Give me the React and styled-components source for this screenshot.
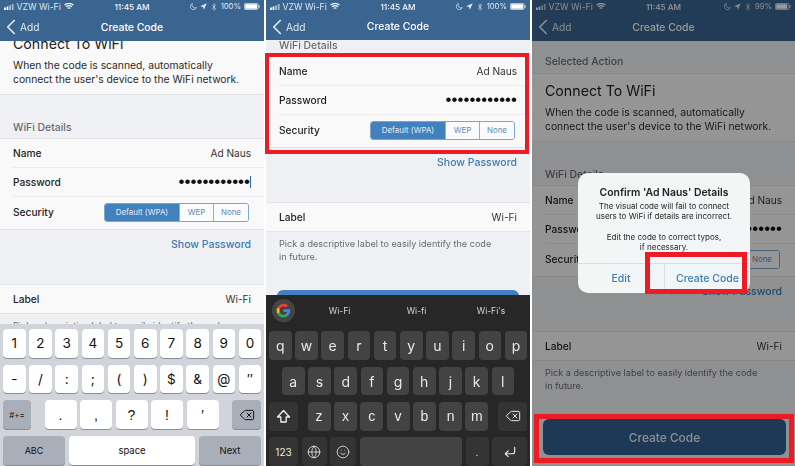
import React from 'react';
import styled, { createGlobalStyle } from 'styled-components';
import { ChevronLeft, Delete, Globe, Smile, CornerDownLeft, Bluetooth } from 'lucide-react';

const Global = createGlobalStyle`
  html, body { margin: 0; padding: 0; background: #fff; }
  body { font-family: Inter, "Liberation Sans", sans-serif; width: 795px; height: 466px; overflow: hidden; }
`;

const Page = styled.div`
  display: flex;
  width: 795px;
  height: 466px;
  filter: blur(0.3px);
`;
const Phone = styled.div`
  position: relative;
  display: flex;
  flex-direction: column;
  width: ${p => p.$w}px;
  margin-left: ${p => p.$ml || 0}px;
  height: 466px;
  flex: none;
  background: #eff0f3;
`;
const Top = styled.div`
  flex: none;
  height: ${p => p.$h}px;
  background: #3a6591;
  color: #fff;
  display: flex;
  flex-direction: column;
`;
const Status = styled.div`
  height: 13px;
  padding: 0 4px 0 4px;
  display: grid;
  grid-template-columns: 1fr auto 1fr;
  align-items: center;
  font-size: 7.7px;
  color: #dfe7ef;
`;
const StatusSide = styled.div`
  display: flex;
  align-items: center;
  gap: ${p => (p.$end ? 3 : 1.5)}px;
  justify-content: ${p => (p.$end ? 'flex-end' : 'flex-start')};
`;
const Carrier = styled.span`
  font-size: 8.7px;
  margin-right: 2px;
`;
const Time = styled.span`
  font-weight: 500;
  font-size: 8.2px;
  color: #f4f6f8;
`;
const Nav = styled.div`
  flex: 1;
  position: relative;
  display: flex;
  align-items: center;
  justify-content: center;
  font-size: 10.4px;
  font-weight: 500;
`;
const Back = styled.div`
  position: absolute;
  left: -2px;
  top: 50%;
  transform: translateY(-50%);
  display: flex;
  align-items: center;
  font-weight: 400;
  font-size: 10.2px;
  opacity: 0.85;
`;
const BackText = styled.span`
  margin-left: -4px;
`;
const Viewport = styled.div`
  flex: 1;
  min-height: 0;
  overflow: hidden;
`;
const Form = styled.div`
  margin-top: ${p => -p.$offset}px;
  display: flex;
  flex-direction: column;
`;
const SectionHead = styled.div`
  height: ${p => p.$h}px;
  padding: 0 13px ${p => p.$pb}px;
  box-sizing: border-box;
  display: flex;
  align-items: flex-end;
  font-size: 10.4px;
  font-weight: 500;
  color: #6c6c70;
`;
const Section = styled.div`
  background: #f9f9f9;
  border-top: 1px solid #e3e4e6;
  border-bottom: 1px solid #e3e4e6;
  box-sizing: border-box;
  padding: ${p => p.$pad || '0'};
`;
const ActionTitle = styled.div`
  font-size: 14.2px;
  line-height: 20px;
  color: #222;
  margin-bottom: 4px;
`;
const ActionText = styled.div`
  font-size: 10.3px;
  line-height: 14px;
  color: #2b2b2b;
`;
const Rows = styled.div`
  padding-left: 13px;
`;
const Row = styled.div`
  height: ${p => p.$h}px;
  box-sizing: border-box;
  padding: 0 13px ${p => p.$pb || 0}px 0;
  display: flex;
  justify-content: space-between;
  align-items: center;
  border-bottom: ${p => (p.$last ? 'none' : '1px solid #ececee')};
`;
const RowLabel = styled.span`
  font-size: 10.2px;
  font-weight: 500;
  color: #1e1e1e;
`;
const RowValue = styled.span`
  font-size: 10.1px;
  color: #333;
`;
const Dots = styled.span`
  font-family: "Liberation Sans", sans-serif;
  font-size: 17px;
  line-height: 14px;
  color: #111;
  display: flex;
  align-items: center;
`;
const Caret = styled.i`
  display: inline-block;
  width: 1px;
  height: 12px;
  background: #2f6ea8;
`;
const Segments = styled.div`
  display: flex;
  height: 19px;
  margin-right: 2px;
  border: 1px solid #7ea4c6;
  border-radius: 3px;
  box-sizing: border-box;
  overflow: hidden;
`;
const Segment = styled.div`
  width: ${p => p.$w}px;
  display: flex;
  align-items: center;
  justify-content: center;
  font-size: 7.9px;
  background: ${p => (p.$on ? '#4281bd' : '#fafbfc')};
  color: ${p => (p.$on ? '#e4edf5' : '#5f8cb3')};
  border-left: ${p => (p.$first ? 'none' : '1px solid #8fb0cc')};
`;
const LinkRow = styled.div`
  height: 54px;
  box-sizing: border-box;
  padding: 8px 13px 0;
  text-align: right;
  font-size: 10.5px;
  font-weight: 500;
  color: #3f7cae;
`;
const Help = styled.div`
  padding: 5px 32px 0 13px;
  font-size: 9.1px;
  line-height: 13px;
  color: #6b6b6f;
`;
const SubmitButton = styled.div`
  margin: 27px ${p => p.$mr}px 0 11px;
  height: 36px;
  border-radius: 6px;
  background: ${p => p.$bg};
  color: #e6edf3;
  font-size: 11.9px;
  font-weight: 500;
  display: flex;
  align-items: center;
  justify-content: center;
`;
const Dim = styled.div`
  position: absolute;
  inset: 0;
  background: rgba(0, 0, 0, 0.4);
`;
const RedBox = styled.div`
  position: absolute;
  left: ${p => p.$l}px;
  top: ${p => p.$t}px;
  width: ${p => p.$w}px;
  height: ${p => p.$h}px;
  box-sizing: border-box;
  border: ${p => p.$b}px solid #ed1c24;
`;
const Alert = styled.div`
  position: absolute;
  left: 46px;
  top: 173px;
  width: 172px;
  height: 120px;
  border-radius: 10px;
  background: radial-gradient(circle at 65% 75%, #f0f6fa 0, #f4f5f5 60%);
  display: flex;
  flex-direction: column;
`;
const AlertBody = styled.div`
  flex: 1;
  padding-top: 12px;
  text-align: center;
  color: #222;
`;
const AlertTitle = styled.div`
  font-size: 10.4px;
  font-weight: 600;
  line-height: 16px;
`;
const AlertText = styled.div`
  font-size: 8px;
  line-height: 10.3px;
  margin-top: ${p => p.$mt || 0}px;
`;
const AlertButtons = styled.div`
  display: grid;
  grid-template-columns: 86px 86px;
  height: 29px;
  border-top: 1px solid #dcdfe2;
`;
const AlertButton = styled.div`
  display: flex;
  align-items: center;
  justify-content: center;
  font-size: 10.5px;
  font-weight: 500;
  color: #3f7cae;
  border-left: ${p => (p.$div ? '1px solid #dcdfe2' : 'none')};
`;
const LightKb = styled.div`
  flex: none;
  height: 142px;
  box-sizing: border-box;
  background: #d1d5db;
  padding: 5px 3px 0;
  display: flex;
  flex-direction: column;
  gap: 7.2px;
`;
const DarkKb = styled.div`
  flex: none;
  height: 171px;
  box-sizing: border-box;
  background: #272727;
  padding: 0 3px;
  display: flex;
  flex-direction: column;
  gap: 6.7px;
`;
const KeyRow = styled.div`
  display: flex;
  height: ${p => (p.$dark ? 29 : 28.5)}px;
  gap: ${p => p.$gap ?? 3.6}px;
  justify-content: ${p => p.$justify || 'flex-start'};
  padding-left: ${p => p.$pl || 0}px;
`;
const KeyGroup = styled.div`
  display: flex;
  gap: ${p => p.$gap}px;
  font-family: "Liberation Sans", sans-serif;
`;
const Key = styled.div`
  flex: ${p => (p.$grow ? '1' : 'none')};
  width: ${p => p.$w}px;
  border-radius: 4px;
  display: flex;
  align-items: center;
  justify-content: center;
  font-size: ${p => p.$fs || 15}px;
  background: ${p => p.$bg || '#fff'};
  color: ${p => p.$fg || '#111'};
  box-shadow: ${p => (p.$dark ? 'none' : '0 1px 0 #8a8e94')};
`;
const Suggestions = styled.div`
  height: 26px;
  padding-top: 3px;
  display: grid;
  grid-template-columns: 32px 77px 77px 1fr;
  align-items: center;
  font-size: 8.5px;
  color: #d6d6d6;
  margin-bottom: 1px;
`;
const GoogleButton = styled.div`
  width: 23px;
  height: 23px;
  margin-left: 3px;
  border-radius: 50%;
  background: #444;
  display: flex;
  align-items: center;
  justify-content: center;
`;
const Word = styled.div`
  text-align: center;
`;

const Signal = () => (
  <svg width="11" height="6" viewBox="0 0 11 6">
    <rect x="0" y="3.5" width="1.8" height="2.5" fill="#fff" />
    <rect x="2.6" y="2.5" width="1.8" height="3.5" fill="#fff" />
    <rect x="5.2" y="1.2" width="1.8" height="4.8" fill="#fff" opacity=".55" />
    <rect x="7.8" y="0" width="1.8" height="6" fill="#fff" opacity=".55" />
  </svg>
);
const WifiIcon = () => (
  <svg width="10" height="7" viewBox="0 0 10 7" fill="none" stroke="#fff" strokeWidth="1.1">
    <path d="M.5 2.2C3 -.1 7 -.1 9.5 2.2M2 3.9c1.7-1.5 4.3-1.5 6 0M3.6 5.4c.8-.6 2-.6 2.8 0" />
  </svg>
);
const MoonIcon = () => (
  <svg width="7" height="7" viewBox="0 0 7 7">
    <path d="M2.3.6a3.1 3.1 0 1 0 4 4A3 3 0 0 1 2.3.6z" fill="none" stroke="#fff" strokeWidth=".8" opacity=".75" />
  </svg>
);
const LocationIcon = () => (
  <svg width="7" height="7" viewBox="0 0 7 7">
    <path d="M6.8.2 3.8 6.8 3.1 3.9.2 3.2z" fill="#fff" opacity=".85" />
  </svg>
);
const BatteryIcon = ({ level }) => (
  <svg width="16" height="7" viewBox="0 0 16 7">
    <rect x=".4" y=".4" width="13.6" height="6.2" rx="1.3" fill="none" stroke="#fff" strokeWidth=".7" />
    <rect x="1.2" y="1.2" width={level} height="4.6" fill="#fff" />
    <rect x="14.5" y="2.3" width="1" height="2.4" fill="#fff" />
  </svg>
);
const GoogleLogo = () => (
  <svg width="15" height="15" viewBox="0 0 24 24">
    <path d="M22.5 12.3c0-.8-.1-1.5-.2-2.3H12v4.4h5.9a5 5 0 0 1-2.2 3.3v2.7h3.5c2.1-1.9 3.3-4.8 3.3-8.1z" fill="#4285f4" />
    <path d="M12 23c3 0 5.4-1 7.2-2.6l-3.5-2.7c-1 .7-2.2 1-3.7 1-2.8 0-5.2-1.9-6.1-4.5H2.3v2.8A11 11 0 0 0 12 23z" fill="#34a853" />
    <path d="M5.9 14.2a6.6 6.6 0 0 1 0-4.4V7H2.3a11 11 0 0 0 0 10z" fill="#fbbc05" />
    <path d="M12 5.4c1.6 0 3 .5 4.1 1.6l3.1-3.1A11 11 0 0 0 2.3 7l3.6 2.8C6.8 7.3 9.2 5.4 12 5.4z" fill="#ea4335" />
  </svg>
);
const ShiftIcon = () => (
  <svg width="15" height="15" viewBox="0 0 15 15" fill="none" stroke="#f0f0f0" strokeWidth="1.3" strokeLinejoin="round">
    <path d="M7.5 1.5 1.5 8h3.3v5h5.4V8h3.3z" />
  </svg>
);

const Header = ({ h, pct = '100%', level = 11.8 }) => (
  <Top $h={h}>
    <Status>
      <StatusSide><Signal /><Carrier>VZW Wi-Fi</Carrier><WifiIcon /></StatusSide>
      <Time>11:45 AM</Time>
      <StatusSide $end>
        <MoonIcon /><LocationIcon /><Bluetooth size={8} strokeWidth={1.8} />
        <span>{pct}</span><BatteryIcon level={level} />
      </StatusSide>
    </Status>
    <Nav>
      <Back><ChevronLeft size={26} strokeWidth={1.6} /><BackText>Add</BackText></Back>
      Create Code
    </Nav>
  </Top>
);

const FormBody = ({ offset, caret, buttonBg, buttonMr }) => (
  <Form $offset={offset}>
    <SectionHead $h={32} $pb={5}>Selected Action</SectionHead>
    <Section $pad="7px 13px 8px">
      <ActionTitle>Connect To WiFi</ActionTitle>
      <ActionText>When the code is scanned, automatically<br />connect the user's device to the WiFi network.</ActionText>
    </Section>
    <SectionHead $h={43} $pb={4}>WiFi Details</SectionHead>
    <Section>
      <Rows>
        <Row $h={29}><RowLabel>Name</RowLabel><RowValue>Ad Naus</RowValue></Row>
        <Row $h={29}><RowLabel>Password</RowLabel><Dots>••••••••••••{caret && <Caret />}</Dots></Row>
        <Row $h={32} $pb={2} $last>
          <RowLabel>Security</RowLabel>
          <Segments>
            <Segment $on $first $w={74}>Default (WPA)</Segment>
            <Segment $w={33}>WEP</Segment>
            <Segment $w={34}>None</Segment>
          </Segments>
        </Row>
      </Rows>
    </Section>
    <LinkRow>Show Password</LinkRow>
    <Section>
      <Rows>
        <Row $h={28} $last><RowLabel>Label</RowLabel><RowValue>Wi-Fi</RowValue></Row>
      </Rows>
    </Section>
    <Help>Pick a descriptive label to easily identify the code in future.</Help>
    <SubmitButton $bg={buttonBg} $mr={buttonMr}>Create Code</SubmitButton>
  </Form>
);

const n1 = ['1', '2', '3', '4', '5', '6', '7', '8', '9', '0'];
const n2 = ['-', '/', ':', ';', '(', ')', '$', '&', '@', '″'];
const n3 = ['.', ',', '?', '!', '′'];
const GREY = '#a9afb9';

const NumberKeyboard = () => (
  <LightKb>
    <KeyRow>{n1.map(k => <Key key={k} $w={22.6} $fs={13.5}>{k}</Key>)}</KeyRow>
    <KeyRow>{n2.map(k => <Key key={k} $w={22.6} $fs={13.5}>{k}</Key>)}</KeyRow>
    <KeyRow $justify="space-between">
      <Key $w={28} $bg={GREY} $fs={8}>#+=</Key>
      <KeyGroup $gap={3.5}>{n3.map(k => <Key key={k} $w={32} $fs={14}>{k}</Key>)}</KeyGroup>
      <Key $w={29} $bg={GREY}><Delete size={16} strokeWidth={1.5} /></Key>
    </KeyRow>
    <KeyRow $gap={4}>
      <Key $w={62} $bg={GREY} $fs={9}>ABC</Key>
      <Key $grow $fs={9.5}>space</Key>
      <Key $w={62} $bg={GREY} $fs={9.5}>Next</Key>
    </KeyRow>
  </LightKb>
);

const d1 = ['q', 'w', 'e', 'r', 't', 'y', 'u', 'i', 'o', 'p'];
const d2 = ['a', 's', 'd', 'f', 'g', 'h', 'j', 'k', 'l'];
const d3 = ['z', 'x', 'c', 'v', 'b', 'n', 'm'];
const DK = '#434343';
const DF = '#e8e8e8';
const DS = '#343434';
const dark = { $dark: true, $bg: DK, $fg: DF, $fs: 14 };
const darkFn = { $dark: true, $bg: DS, $fg: DF, $fs: 10 };

const LetterKeyboard = () => (
  <DarkKb>
    <Suggestions>
      <GoogleButton><GoogleLogo /></GoogleButton>
      <Word>Wi-Fi</Word>
      <Word>Wi-fi</Word>
      <Word>Wi-Fi's</Word>
    </Suggestions>
    <KeyRow $dark>{d1.map(k => <Key key={k} $w={22.6} {...dark}>{k}</Key>)}</KeyRow>
    <KeyRow $dark $pl={13}>{d2.map(k => <Key key={k} $w={22.6} {...dark}>{k}</Key>)}</KeyRow>
    <KeyRow $dark $justify="space-between">
      <Key $w={29} {...darkFn}><ShiftIcon /></Key>
      <KeyGroup $gap={3.3}>{d3.map(k => <Key key={k} $w={23} {...dark}>{k}</Key>)}</KeyGroup>
      <Key $w={29} {...darkFn}><Delete size={16} strokeWidth={1.5} /></Key>
    </KeyRow>
    <KeyRow $dark $gap={3.5}>
      <Key $w={29} {...darkFn}>123</Key>
      <Key $w={25} {...darkFn}><Globe size={14} strokeWidth={1.4} /></Key>
      <Key $w={26} {...darkFn}><Smile size={14} strokeWidth={1.4} /></Key>
      <Key $grow {...dark} />
      <Key $w={23} {...darkFn}>.</Key>
      <Key $w={35} {...darkFn}><CornerDownLeft size={14} strokeWidth={2} /></Key>
    </KeyRow>
  </DarkKb>
);

export default function App() {
  return (
    <Page>
      <Global />
      <Phone $w={264}>
        <Header h={41} />
        <Viewport><FormBody offset={47} caret buttonBg="#4281bd" buttonMr={11} /></Viewport>
        <NumberKeyboard />
      </Phone>
      <Phone $w={264} $ml={2}>
        <Header h={40} />
        <Viewport><FormBody offset={128} buttonBg="#4281bd" buttonMr={11} /></Viewport>
        <LetterKeyboard />
        <RedBox $l={-1} $t={53} $w={264} $h={101} $b={4} />
      </Phone>
      <Phone $w={263} $ml={2}>
        <Header h={41} pct="99%" level={11} />
        <Viewport><FormBody offset={0} buttonBg="#32608f" buttonMr={9} /></Viewport>
        <Dim />
        <Alert>
          <AlertBody>
            <AlertTitle>Confirm 'Ad Naus' Details</AlertTitle>
            <AlertText>The visual code will fail to connect<br />users to WiFi if details are incorrect.</AlertText>
            <AlertText $mt={10}>Edit the code to correct typos,<br />if necessary.</AlertText>
          </AlertBody>
          <AlertButtons>
            <AlertButton>Edit</AlertButton>
            <AlertButton $div>Create Code</AlertButton>
          </AlertButtons>
        </Alert>
        <RedBox $l={113} $t={252} $w={102} $h={42} $b={5} />
        <RedBox $l={2} $t={414} $w={260} $h={49} $b={5} />
      </Phone>
    </Page>
  );
}
